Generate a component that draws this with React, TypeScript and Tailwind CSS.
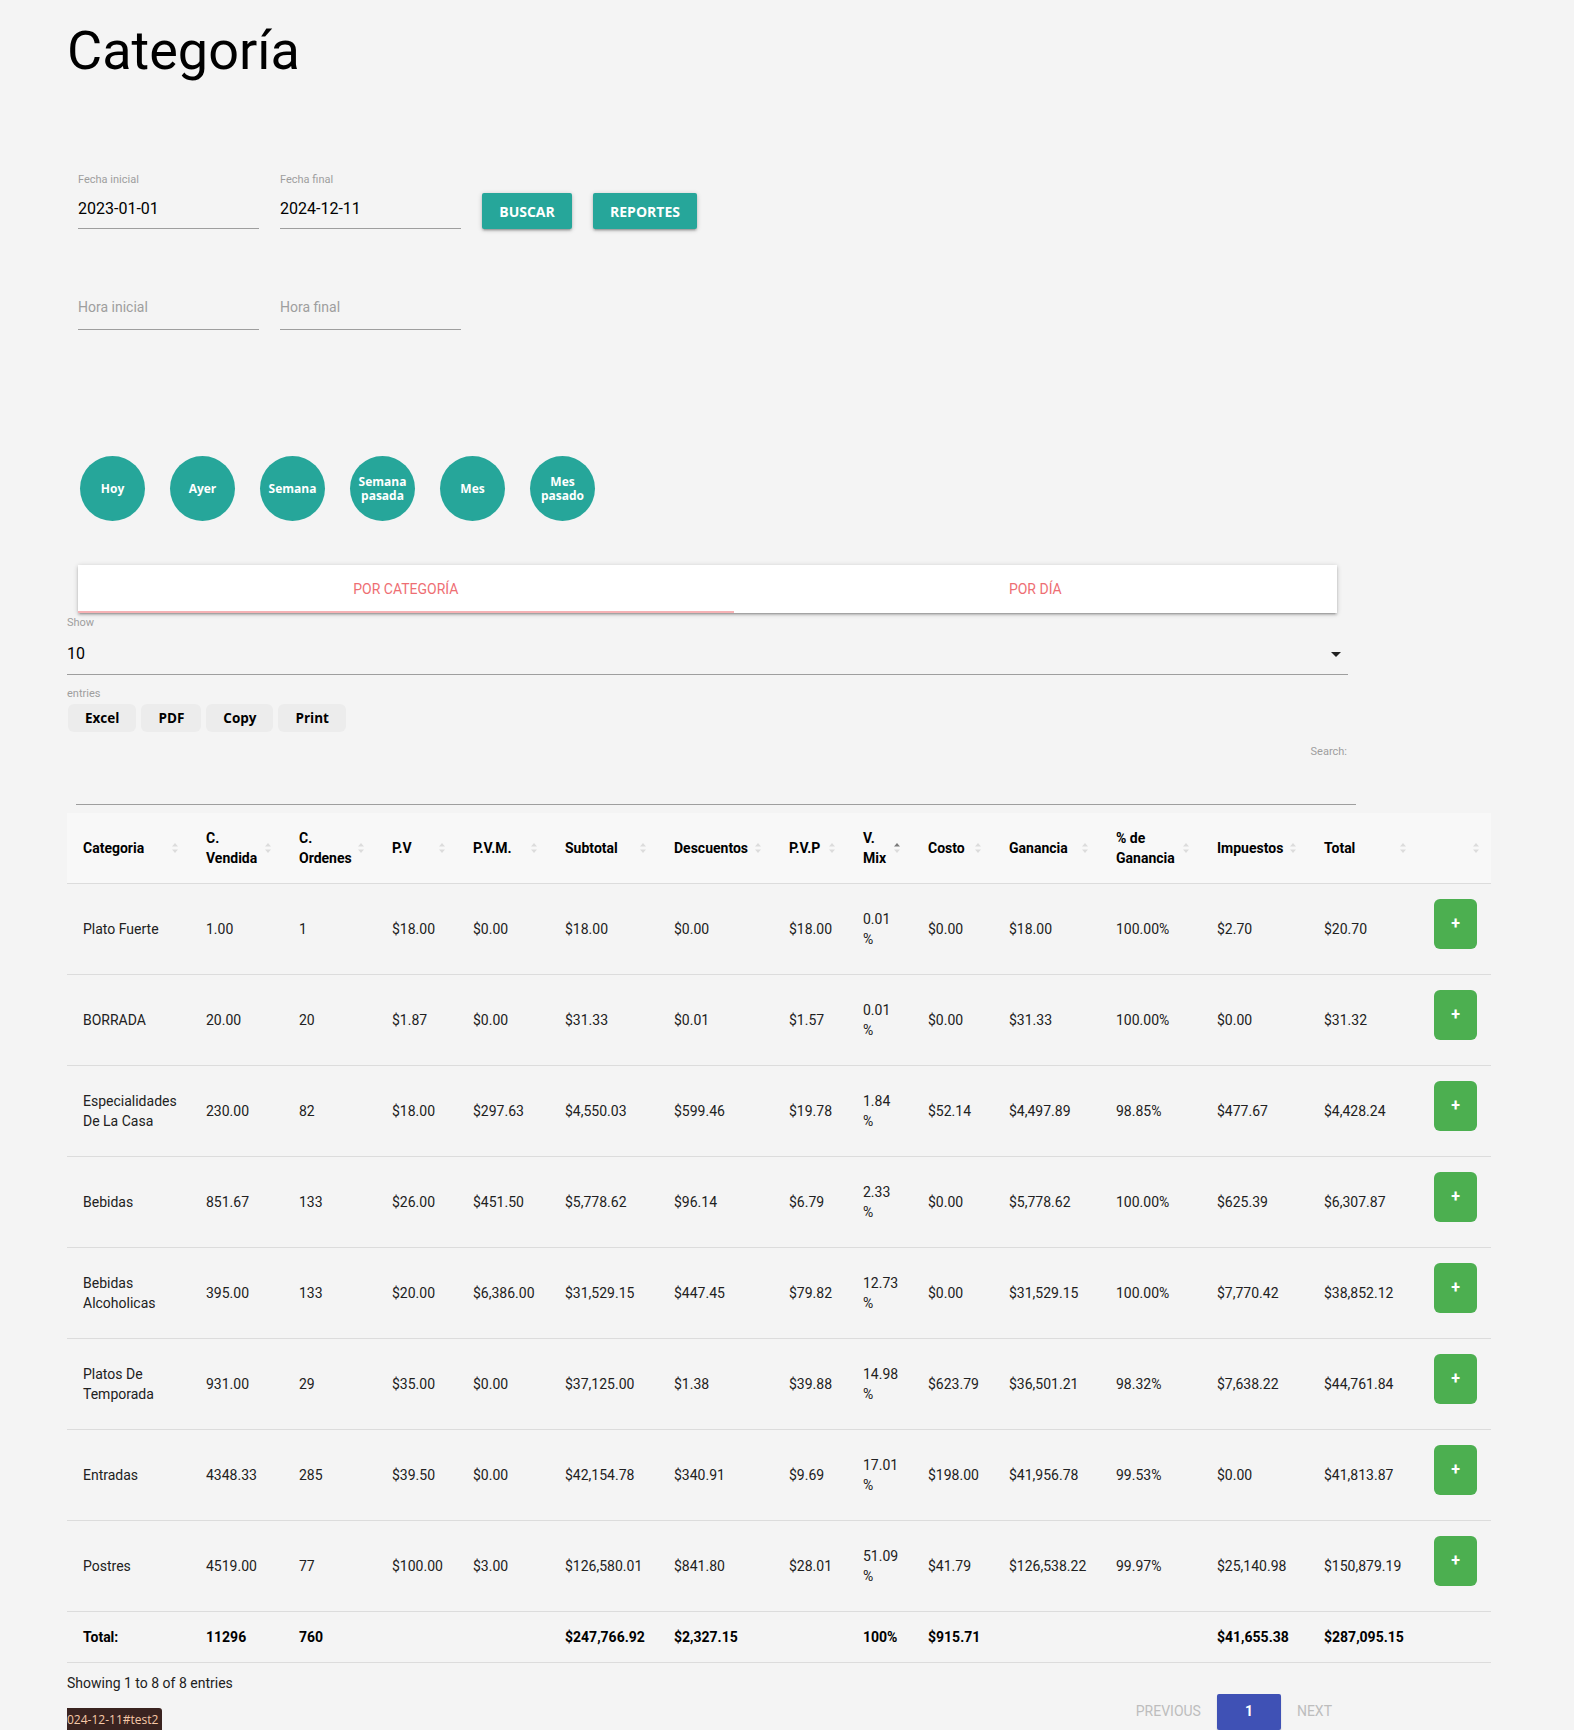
import { useState } from "react";

type Row = {
  cat: string[];
  vals: string[];
  mix: string;
  rest: string[];
};

const rows: Row[] = [
  { cat: ["Plato Fuerte"], vals: ["1.00", "1", "$18.00", "$0.00", "$18.00", "$0.00", "$18.00"], mix: "0.01", rest: ["$0.00", "$18.00", "100.00%", "$2.70", "$20.70"] },
  { cat: ["BORRADA"], vals: ["20.00", "20", "$1.87", "$0.00", "$31.33", "$0.01", "$1.57"], mix: "0.01", rest: ["$0.00", "$31.33", "100.00%", "$0.00", "$31.32"] },
  { cat: ["Especialidades", "De La Casa"], vals: ["230.00", "82", "$18.00", "$297.63", "$4,550.03", "$599.46", "$19.78"], mix: "1.84", rest: ["$52.14", "$4,497.89", "98.85%", "$477.67", "$4,428.24"] },
  { cat: ["Bebidas"], vals: ["851.67", "133", "$26.00", "$451.50", "$5,778.62", "$96.14", "$6.79"], mix: "2.33", rest: ["$0.00", "$5,778.62", "100.00%", "$625.39", "$6,307.87"] },
  { cat: ["Bebidas", "Alcoholicas"], vals: ["395.00", "133", "$20.00", "$6,386.00", "$31,529.15", "$447.45", "$79.82"], mix: "12.73", rest: ["$0.00", "$31,529.15", "100.00%", "$7,770.42", "$38,852.12"] },
  { cat: ["Platos De", "Temporada"], vals: ["931.00", "29", "$35.00", "$0.00", "$37,125.00", "$1.38", "$39.88"], mix: "14.98", rest: ["$623.79", "$36,501.21", "98.32%", "$7,638.22", "$44,761.84"] },
  { cat: ["Entradas"], vals: ["4348.33", "285", "$39.50", "$0.00", "$42,154.78", "$340.91", "$9.69"], mix: "17.01", rest: ["$198.00", "$41,956.78", "99.53%", "$0.00", "$41,813.87"] },
  { cat: ["Postres"], vals: ["4519.00", "77", "$100.00", "$3.00", "$126,580.01", "$841.80", "$28.01"], mix: "51.09", rest: ["$41.79", "$126,538.22", "99.97%", "$25,140.98", "$150,879.19"] },
];

const headers = [
  { lines: ["Categoria"] },
  { lines: ["C.", "Vendida"] },
  { lines: ["C.", "Ordenes"] },
  { lines: ["P.V"] },
  { lines: ["P.V.M."] },
  { lines: ["Subtotal"] },
  { lines: ["Descuentos"] },
  { lines: ["P.V.P"] },
  { lines: ["V.", "Mix"], active: true },
  { lines: ["Costo"] },
  { lines: ["Ganancia"] },
  { lines: ["% de", "Ganancia"] },
  { lines: ["Impuestos"] },
  { lines: ["Total"] },
  { lines: [] as string[] },
];

const totals = ["Total:", "11296", "760", "", "", "$247,766.92", "$2,327.15", "", "100%", "$915.71", "", "", "$41,655.38", "$287,095.15", ""];

function SortIcon({ active }: { active?: boolean }) {
  return (
    <svg width="6" height="11" viewBox="0 0 6 11" className="absolute right-[12px] top-1/2 -translate-y-1/2">
      <polygon points="0,4 3,0.5 6,4" fill={active ? "#7a7a7a" : "#dcdcdc"} />
      <polygon points="0,7 3,10.5 6,7" fill="#dcdcdc" />
    </svg>
  );
}

export default function App() {
  const [tab, setTab] = useState(0);
  const quick = [["Hoy"], ["Ayer"], ["Semana"], ["Semana", "pasada"], ["Mes"], ["Mes", "pasado"]];

  return (
    <div className="min-h-screen overflow-hidden bg-[#f4f4f4] pl-[67px] pt-[20px] font-['Roboto',sans-serif] text-[#212121]">
      <h1 className="h-[63px] text-[54px] leading-[62px] font-normal text-black">Categoría</h1>

      {/* Fechas */}
      <div className="ml-[11px] mt-[90px] flex items-end gap-[21px]">
        <div className="w-[181px]">
          <div className="h-[14px] text-[11px] leading-[14px] text-[#9e9e9e]">Fecha inicial</div>
          <div className="flex h-[42px] items-center border-b border-[#9e9e9e] pt-[3px] text-[16px] text-black">2023-01-01</div>
        </div>
        <div className="w-[181px]">
          <div className="h-[14px] text-[11px] leading-[14px] text-[#9e9e9e]">Fecha final</div>
          <div className="flex h-[42px] items-center border-b border-[#9e9e9e] pt-[3px] text-[16px] text-black">2024-12-11</div>
        </div>
        <button className="h-[36px] w-[90px] rounded-[2px] bg-[#26a69a] font-['Open_Sans',sans-serif] text-[14px] font-bold text-white shadow-[0_2px_2px_0_rgba(0,0,0,0.14),0_3px_1px_-2px_rgba(0,0,0,0.12),0_1px_5px_0_rgba(0,0,0,0.2)]">
          BUSCAR
        </button>
        <button className="h-[36px] w-[104px] rounded-[2px] bg-[#26a69a] font-['Open_Sans',sans-serif] text-[14px] font-bold text-white shadow-[0_2px_2px_0_rgba(0,0,0,0.14),0_3px_1px_-2px_rgba(0,0,0,0.12),0_1px_5px_0_rgba(0,0,0,0.2)]">
          REPORTES
        </button>
      </div>

      {/* Horas */}
      <div className="ml-[11px] mt-[56px] flex gap-[21px]">
        <div className="flex h-[45px] w-[181px] items-center border-b border-[#9e9e9e] text-[14px] text-[#9e9e9e]">Hora inicial</div>
        <div className="flex h-[45px] w-[181px] items-center border-b border-[#9e9e9e] text-[14px] text-[#9e9e9e]">Hora final</div>
      </div>

      {/* Rangos rapidos */}
      <div className="ml-[13px] mt-[126px] flex gap-[25px]">
        {quick.map((q) => (
          <button
            key={q.join(" ")}
            className="flex h-[65px] w-[65px] flex-col items-center justify-center rounded-full bg-[#26a69a] font-['Open_Sans',sans-serif] text-[12px] font-bold leading-[14px] text-white"
          >
            {q.map((l) => (
              <span key={l}>{l}</span>
            ))}
          </button>
        ))}
      </div>

      {/* Tabs */}
      <div className="ml-[11px] mt-[44px] flex h-[48px] w-[1259px] bg-white shadow-[0_2px_2px_0_rgba(0,0,0,0.14),0_3px_1px_-2px_rgba(0,0,0,0.12),0_1px_5px_0_rgba(0,0,0,0.2)]">
        {["POR CATEGORÍA", "POR DÍA"].map((t, i) => (
          <button
            key={t}
            onClick={() => setTab(i)}
            className="relative flex flex-auto items-center justify-center px-6 text-[14px] uppercase text-[#ee6e73]"
          >
            {t}
            {tab === i && <span className="absolute bottom-0 left-0 h-[2px] w-full bg-[#f6b2b5]" />}
          </button>
        ))}
      </div>

      {/* Show entries */}
      <div className="mt-[3px] w-[1281px]">
        <div className="h-[14px] text-[11px] leading-[14px] text-[#9e9e9e]">Show</div>
        <div className="flex h-[45px] items-center justify-between border-b border-[#9e9e9e] pt-[4px] text-[16px] text-black">
          <span>10</span>
          <svg width="10" height="5" viewBox="0 0 10 5" className="mr-[7px]">
            <polygon points="0,0 10,0 5,5" fill="#222" />
          </svg>
        </div>
      </div>
      <div className="mt-[12px] h-[14px] text-[11px] leading-[14px] text-[#9e9e9e]">entries</div>
      <div className="ml-[1px] mt-[3px] flex gap-[5px] font-['Open_Sans',sans-serif] text-[13.5px] font-bold text-black">
        {["Excel", "PDF", "Copy", "Print"].map((b) => (
          <button key={b} className="h-[28px] rounded-[6px] bg-[#ececec] px-[17px]">
            {b}
          </button>
        ))}
      </div>

      {/* Search */}
      <div className="mt-[13px] w-[1280px] text-right text-[11px] leading-[14px] text-[#9e9e9e]">Search:</div>
      <div className="ml-[9px] h-[46px] w-[1280px] border-b border-[#9e9e9e]" />

      {/* Tabla */}
      <table className="mt-[8px] w-[1424px] table-fixed border-collapse text-[14px] leading-[20px]">
        <colgroup>
          <col className="w-[123px]" />
          <col className="w-[93px]" />
          <col className="w-[93px]" />
          <col className="w-[81px]" />
          <col className="w-[92px]" />
          <col className="w-[109px]" />
          <col className="w-[115px]" />
          <col className="w-[74px]" />
          <col className="w-[65px]" />
          <col className="w-[81px]" />
          <col className="w-[107px]" />
          <col className="w-[101px]" />
          <col className="w-[107px]" />
          <col className="w-[110px]" />
          <col className="w-[73px]" />
        </colgroup>
        <thead>
          <tr className="h-[70px] border-b border-[#dcdcdc] bg-[#f8f8f8]">
            {headers.map((h, i) => (
              <th key={i} className="relative whitespace-nowrap pl-4 text-left align-middle font-bold text-black">
                {h.lines.map((l, j) => (
                  <div key={j}>{l}</div>
                ))}
                <SortIcon active={h.active} />
              </th>
            ))}
          </tr>
        </thead>
        <tbody>
          {rows.map((r) => (
            <tr key={r.cat.join(" ")} className="h-[91px] border-b border-[#dcdcdc]">
              <td className="whitespace-nowrap pl-4 align-middle">
                {r.cat.map((l) => (
                  <div key={l}>{l}</div>
                ))}
              </td>
              {r.vals.map((v, i) => (
                <td key={i} className="whitespace-nowrap pl-4 align-middle">
                  {v}
                </td>
              ))}
              <td className="whitespace-nowrap pl-4 align-middle">
                <div>{r.mix}</div>
                <div>%</div>
              </td>
              {r.rest.map((v, i) => (
                <td key={i} className="whitespace-nowrap pl-4 align-middle">
                  {v}
                </td>
              ))}
              <td className="pl-4 align-middle">
                <button className="mb-[9px] block h-[50px] w-[43px] rounded-[6px] bg-[#4caf50] text-[16px] font-bold text-white">
                  +
                </button>
              </td>
            </tr>
          ))}
          <tr className="h-[51px] border-b border-[#dcdcdc] font-bold text-black">
            {totals.map((t, i) => (
              <td key={i} className="whitespace-nowrap pl-4 align-middle">
                {t}
              </td>
            ))}
          </tr>
        </tbody>
      </table>

      <div className="mt-[10px] text-[14px] leading-[20px] text-[#212121]">Showing 1 to 8 of 8 entries</div>

      <div className="mt-[1px] flex w-[1281px] items-start justify-between">
        <div className="mt-[14px] rounded-tr-[3px] bg-[#3a2320] pr-[4px] font-['Open_Sans',sans-serif] text-[12px] leading-[24px] text-[#f6c9a8]">
          024-12-11#test2
        </div>
        <div className="flex items-center text-[14px] uppercase">
          <span className="px-4 text-[#bdbdbd]">Previous</span>
          <span className="flex h-[36px] w-[64px] items-center justify-center rounded-[2px] bg-[#3f51b5] font-bold text-white shadow-[0_2px_2px_0_rgba(0,0,0,0.14)]">
            1
          </span>
          <span className="px-4 text-[#bdbdbd]">Next</span>
        </div>
      </div>
    </div>
  );
}
